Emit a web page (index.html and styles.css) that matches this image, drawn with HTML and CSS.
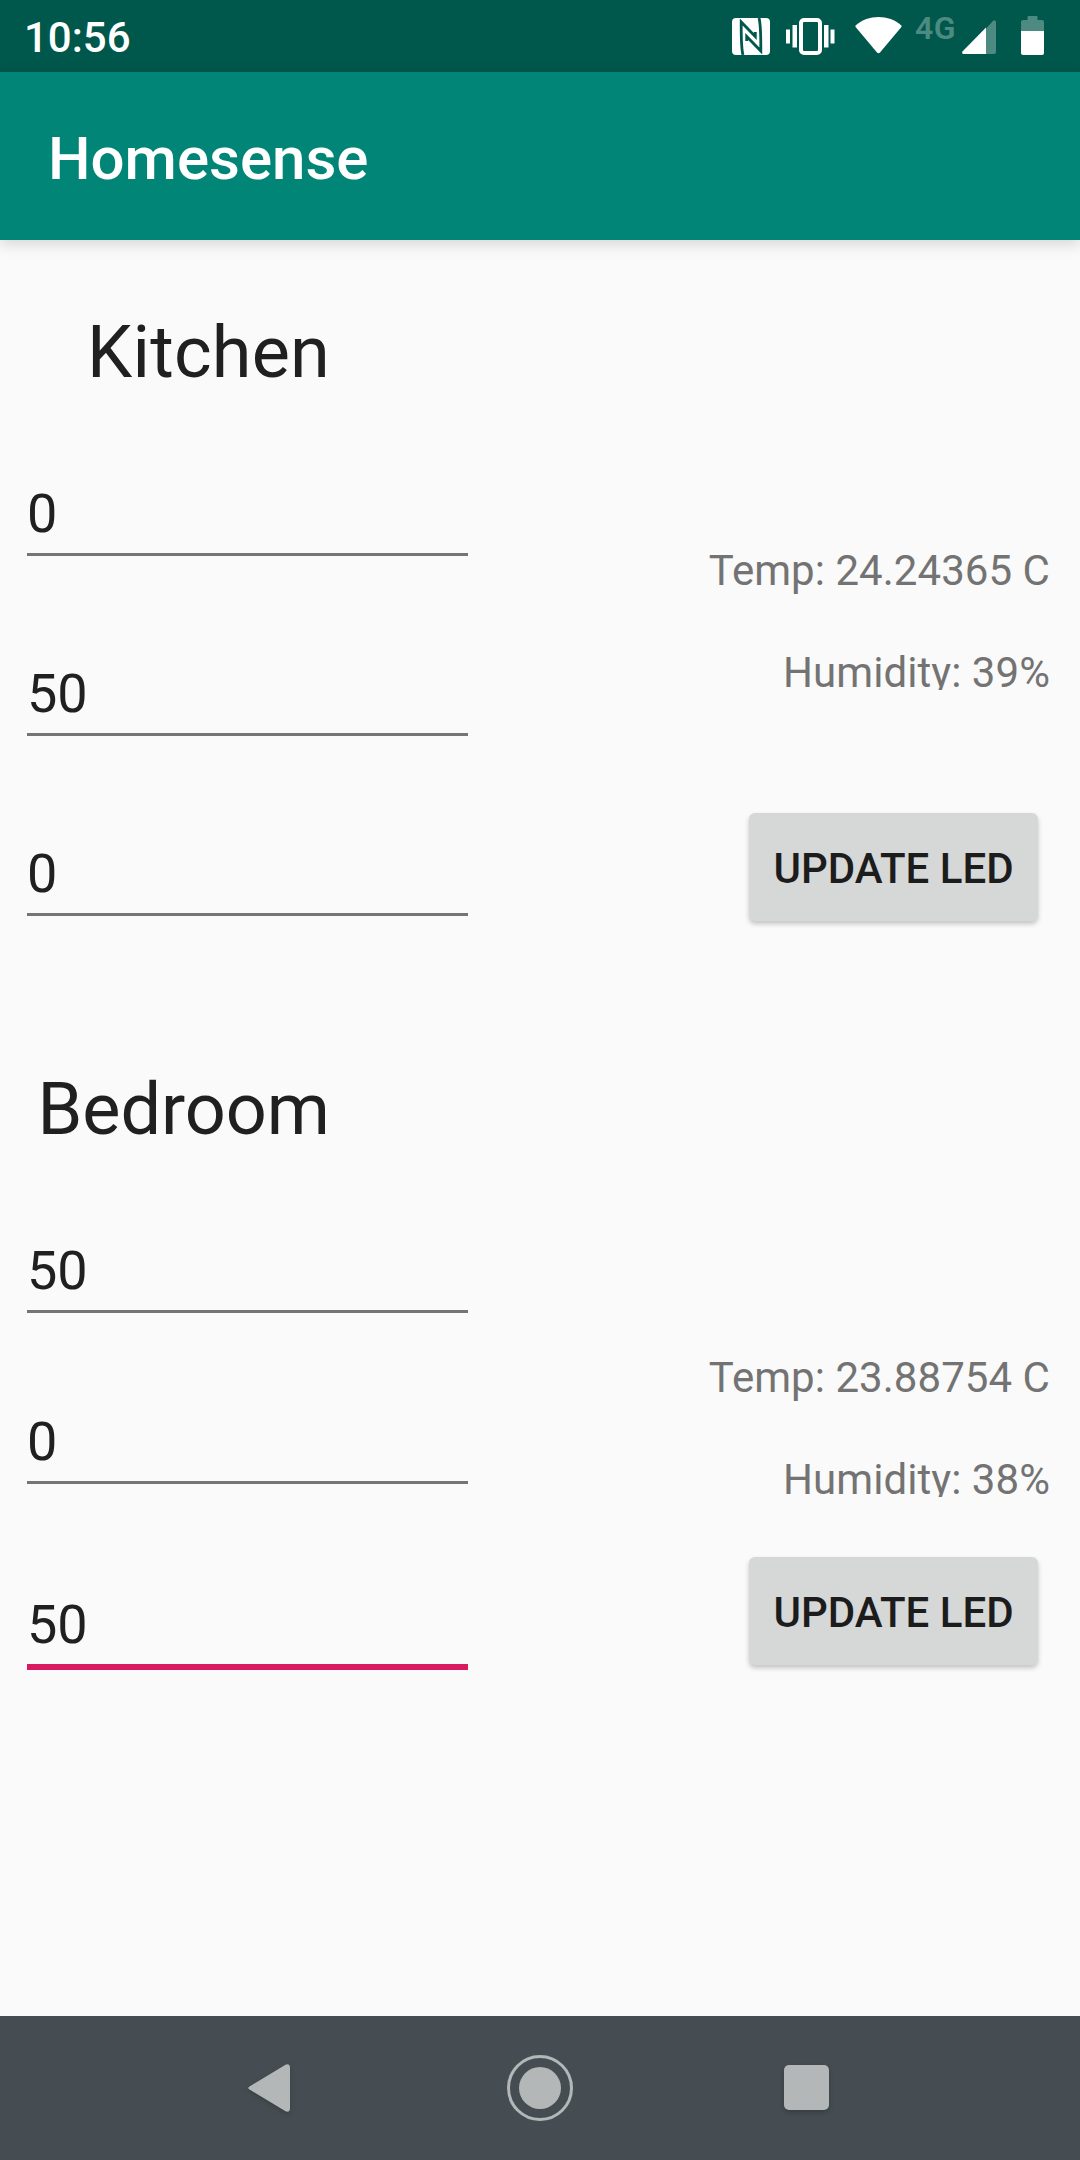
FILE: index.html
```html
<!DOCTYPE html>
<html lang="en">
<head>
<meta charset="utf-8">
<title>Homesense</title>
<link rel="stylesheet" href="styles.css">
</head>
<body>
<header class="status">
  <span class="clock">10:56</span>
  <div class="status-icons">
    <svg class="nfc" width="38" height="37" viewBox="0 0 38 37"><rect width="38" height="37" rx="4" fill="#fff"/><path d="M11 37C9 30 9.200 16 9.200 4L23.300 18.500V14M27 0C29 7 28.800 21 28.800 33L14.700 18.500V23" fill="none" stroke="#00574b" stroke-width="2.800"/></svg>
    <svg class="vibrate" width="50" height="37" viewBox="0 0 50 37"><rect x="15" y="2" width="19" height="33" rx="3" fill="none" stroke="#fff" stroke-width="4"/><path d="M0 11.500h4v14H0zM6.500 7h4.500v22.500H6.500zM38 7h4.500v22.500H38zM44.500 11.500h4v14h-4z" fill="#fff"/></svg>
    <svg class="wifi" width="47" height="37" viewBox="0 0 47 37"><path d="M.6 8.500C7 2.800 15 0 23.500 0S40 2.800 46.400 8.500q.6.700 0 1.600L25 35.500q-1.500 1.500-3 0L.6 10.100q-.6-.9 0-1.600z" fill="#fff"/></svg>
    <span class="network">4G</span>
    <svg class="signal" width="34" height="34" viewBox="0 0 34 34"><path d="M24 8.500 30.500 1.500Q33 -1 34 2V32q0 2-2 2h-8z" fill="#4d8a81"/><path d="M24 7.500V34H2Q-1 34 .7 31.300z" fill="#fff"/></svg>
    <svg class="battery" width="23" height="39" viewBox="0 0 23 39"><path d="M0 15V6q0-2 2-2h4.500V1q0-1 1-1h8q1 0 1 1v3H21q2 0 2 2v9z" fill="#4d8a81"/><path d="M0 15h23v22q0 2-2 2H2q-2 0-2-2z" fill="#fff"/></svg>
  </div>
</header>
<div class="appbar"><h1 class="title">Homesense</h1></div>
<main class="content">
  <section class="room kitchen">
    <div class="leds">
      <h2 class="name">Kitchen</h2>
      <div class="field">0</div>
      <div class="field">50</div>
      <div class="field">0</div>
    </div>
    <div class="readings">
      <p class="temp">Temp: 24.24365 C</p>
      <p class="humidity">Humidity: 39%</p>
      <button class="update" type="button">UPDATE LED</button>
    </div>
  </section>
  <section class="room bedroom">
    <div class="leds">
      <h2 class="name">Bedroom</h2>
      <div class="field">50</div>
      <div class="field">0</div>
      <div class="field focused">50</div>
    </div>
    <div class="readings">
      <p class="temp">Temp: 23.88754 C</p>
      <p class="humidity">Humidity: 38%</p>
      <button class="update" type="button">UPDATE LED</button>
    </div>
  </section>
</main>
<nav class="navbar">
  <svg class="back" width="48" height="56" viewBox="0 0 48 56"><path d="M1.500 22.500 37.500 .7Q42 -1 42 4V44Q42 49 37.500 47.300L1.500 25.500Q-1 24 1.500 22.500z" fill="#b3b7b7"/></svg>
  <svg class="home" width="66" height="66" viewBox="0 0 66 66"><circle cx="33" cy="33" r="31.500" fill="none" stroke="#b3b7b7" stroke-width="3"/><circle cx="33" cy="33" r="21" fill="#b3b7b7"/></svg>
  <span class="recents"></span>
</nav>
</body>
</html>
```
FILE: styles.css
```css
* { box-sizing: border-box; }
body {
  margin: 0;
  width: 1080px;
  height: 2160px;
  display: flex;
  flex-direction: column;
  overflow: hidden;
  background: #fafafa;
  font-family: Roboto, sans-serif;
  color: #202020;
}
h1, h2, p { margin: 0; font-weight: 400; }
svg { display: block; flex: none; }

.status {
  height: 72px;
  flex: none;
  display: flex;
  justify-content: space-between;
  background: #00574b;
  color: #fff;
}
.clock { padding: 14px 0 0 24px; font-size: 42px; line-height: 48px; font-weight: 500; }
.status-icons { display: flex; align-items: flex-start; padding-right: 36px; }
.nfc { margin: 18px 16px 0 0; }
.vibrate { margin: 18px 19px 0 0; }
.wifi { margin: 17px 13px 0 0; }
.network { width: 47px; margin-top: 9px; font-size: 32px; line-height: 38px; font-weight: 600; letter-spacing: .5px; color: #4d8a81; white-space: nowrap; }
.signal { margin: 20px 25px 0 0; }
.battery { margin-top: 16px; }

.appbar {
  height: 168px;
  flex: none;
  padding: 51px 0 0 48px;
  background: #008577;
  box-shadow: 0 4px 14px rgba(0, 0, 0, .15);
  z-index: 1;
}
.title { font-size: 60px; line-height: 72px; font-weight: 500; color: #fff; }

.content { flex: 1; }
.room { height: 757px; display: grid; grid-template-columns: 468px 1fr; }
.leds { padding: 71px 0 0 27px; display: flex; flex-direction: column; }
.name { margin: 0 138px 0 0; font-size: 72px; line-height: 84px; text-align: right; }
.kitchen .name { letter-spacing: .2px; }
.field {
  height: 72px;
  flex: none;
  border-bottom: 3px solid #757575;
  font-size: 54px;
  line-height: 60px;
}
.field.focused { height: 75px; border-bottom: 6px solid #d81b60; }
.kitchen .field { margin-top: 108px; }
.bedroom .field { margin-top: 99px; }
.room .name + .field { margin-top: 89px; }
.bedroom .field.focused { margin-top: 111px; }

.readings { display: flex; flex-direction: column; align-items: flex-end; }
.kitchen .readings { padding-top: 307px; }
.bedroom .readings { padding-top: 357px; }
.temp, .humidity { margin-right: 30px; font-size: 42px; line-height: 48px; letter-spacing: .05px; color: #737373; }
.humidity { height: 41px; margin-top: 54px; overflow: hidden; }
.update {
  width: 289px;
  height: 108px;
  margin: 123px 42px 0 0;
  padding: 3px 0 0;
  border: 0;
  border-radius: 6px;
  background: #d6d7d7;
  box-shadow: 0 3px 5px rgba(0, 0, 0, .22);
  font: 500 42px/48px Roboto, sans-serif;
  color: #1c1c1c;
}
.bedroom .update { margin-top: 60px; }

.navbar {
  height: 144px;
  flex: none;
  display: flex;
  align-items: flex-start;
  background: #454d52;
}
.back { margin: 48px 0 0 248px; filter: drop-shadow(0 2px 2px rgba(40, 50, 50, .5)); }
.home { margin: 39px 0 0 211px; }
.recents {
  width: 45px;
  height: 45px;
  margin: 49px 0 0 211px;
  border-radius: 5px;
  background: #b3b7b7;
  box-shadow: 0 2px 4px rgba(40, 50, 50, .6);
}
```
